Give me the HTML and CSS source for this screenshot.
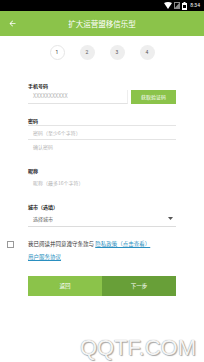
FILE: index.html
```html
<!DOCTYPE html>
<html lang="zh">
<head>
<meta charset="utf-8">
<title>注册</title>
<link rel="stylesheet" href="styles.css">
</head>
<body>
<div class="status">
  <svg class="sb-icon" width="8" height="7" viewBox="0 0 8 7"><path d="M0 1 Q4 -1 8 1 L4 7 Z" fill="#fff"/></svg>
  <svg class="sb-icon" width="6" height="7" viewBox="0 0 6 7"><rect x="0.5" y="0.5" width="5" height="6" fill="none" stroke="#888"/><path d="M0 7 L6 0 L6 7 Z" fill="#888"/></svg>
  <svg class="sb-icon" width="5" height="8" viewBox="0 0 5 8"><rect x="1.5" y="0" width="2" height="1" fill="#fff"/><rect x="0" y="1" width="5" height="7" fill="#fff"/><rect x="1" y="3" width="3" height="3" fill="#000"/></svg>
  <span class="time">8:34</span>
</div>
<header class="appbar">
  <svg class="back" width="9" height="9" viewBox="0 0 24 24"><path d="M20 11H7.83l5.59-5.59L12 4l-8 8 8 8 1.41-1.41L7.83 13H20v-2z" fill="#fff"/></svg>
  <h1 class="title">扩大运营盟移信乐型</h1>
</header>
<div class="steps">
  <span class="step active">1</span>
  <span class="step">2</span>
  <span class="step">3</span>
  <span class="step">4</span>
</div>
<main class="form">
  <div class="label first">手机号码</div>
  <div class="phone-row">
    <div class="input phone">XXXXXXXXXXX</div>
    <div class="code-btn">获取验证码</div>
  </div>
  <div class="label">密码</div>
  <div class="group">
    <div class="input line">密码（至少6个字符）</div>
    <div class="input">确认密码</div>
  </div>
  <div class="label">昵称</div>
  <div class="input nick">昵称（最多16个字符）</div>
  <div class="label">城市（选填）</div>
  <div class="input select">
    <span>选择城市</span>
    <svg width="5" height="3" viewBox="0 0 5 3"><path d="M0 0 H5 L2.5 3 Z" fill="#555"/></svg>
  </div>
</main>
<div class="agree">
  <span class="checkbox"></span>
  <p class="agree-text">我已阅读并同意遵守条款与 <span class="link">隐私政策（点击查看）</span><br><span class="link">用户服务协议</span></p>
</div>
<div class="actions">
  <div class="btn back-btn">返回</div>
  <div class="btn next-btn">下一步</div>
</div>
<div class="watermark">QQTF.COM</div>
</body>
</html>
```

FILE: styles.css
```css
* { box-sizing: border-box; margin: 0; padding: 0; }
html, body { width: 204px; height: 362px; overflow: hidden; }
body {
  background: #fff;
  font-family: "Noto Sans CJK SC", "Noto Sans", sans-serif;
  color: #333;
  position: relative;
}
.status {
  height: 11px;
  background: #000;
  display: flex;
  align-items: center;
  justify-content: flex-end;
  gap: 2px;
  padding-right: 4px;
}
.sb-icon { display: block; }
.time { color: #fff; font-size: 5px; line-height: 11px; margin-left: 1px; font-family: Roboto, sans-serif; }
.appbar {
  height: 25px;
  background: #8bc34a;
  display: flex;
  align-items: center;
  position: relative;
  padding-left: 8px;
}
.back { display: block; }
.title {
  position: absolute;
  left: 0; right: 0;
  text-align: center;
  color: #fff;
  font-size: 7.5px;
  font-weight: normal;
  line-height: 25px;
}
.steps {
  display: flex;
  justify-content: center;
  gap: 15px;
  padding-top: 9px;
}
.step {
  width: 15px; height: 15px;
  border-radius: 50%;
  background: #eeeeee;
  color: #555;
  font-size: 5px;
  line-height: 15px;
  text-align: center;
  font-family: Roboto, sans-serif;
}
.step.active {
  background: #fff;
  border: 1px solid #e6e6e6;
  line-height: 13px;
  color: #333;
}
.form { padding: 0 28px; }
.label {
  font-size: 5px;
  line-height: 9px;
  color: #222;
  font-weight: bold;
  margin-top: 12px;
}
.label.first { margin-top: 21px; }
.phone-row { display: flex; gap: 3px; height: 14px; margin-top: 0; }
.input {
  height: 14px;
  line-height: 13px;
  font-size: 5px;
  color: #b5b5b5;
  padding-left: 5px;
}
.phone { flex: 1; border-bottom: 1px solid #e2e2e2; border-right: 1px solid #eeeeee; font-size: 5.5px; }
.code-btn {
  width: 45px;
  background: #8bc34a;
  color: #fff;
  font-size: 5px;
  line-height: 14px;
  text-align: center;
}
.group { border-top: 1px solid #e4e4e4; }
.input.line { border-bottom: 1px solid #e4e4e4; }
.nick { margin-top: 1px; }
.select {
  height: 16px;
  line-height: 15px;
  border-bottom: 1px solid #dcdcdc;
  display: flex;
  align-items: center;
  justify-content: space-between;
  color: #666;
  padding-right: 3px;
}
.select svg { display: block; }
.agree {
  display: flex;
  align-items: flex-start;
  padding-left: 7px;
  margin-top: 11px;
}
.checkbox {
  width: 7px; height: 7px;
  border: 1px solid #999;
  margin-top: 3px;
  margin-right: 14px;
  flex: none;
}
.agree-text {
  font-size: 5.5px;
  line-height: 12.5px;
  color: #333;
}
.link { color: #2a8fc0; text-decoration: underline; }
.actions {
  display: flex;
  padding: 0 28px;
  margin-top: 13px;
}
.btn {
  flex: 1;
  height: 20px;
  line-height: 20px;
  text-align: center;
  color: #fff;
  font-size: 5.5px;
}
.back-btn { background: #8bc34a; }
.next-btn { background: #689f38; }
.watermark {
  position: absolute;
  right: 8px;
  top: 335px;
  font-family: "Liberation Sans", sans-serif;
  font-size: 22px;
  line-height: 26px;
  color: #f4f4f4;
  text-shadow: 0 0 1px #888, 1px 1px 1px #aaa;
}
```
